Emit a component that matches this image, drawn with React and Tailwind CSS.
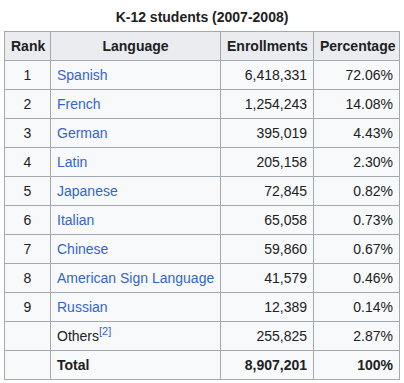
import React from 'react';

const rows = [
    ['1', 'Spanish', '6,418,331', '72.06%'],
    ['2', 'French', '1,254,243', '14.08%'],
    ['3', 'German', '395,019', '4.43%'],
    ['4', 'Latin', '205,158', '2.30%'],
    ['5', 'Japanese', '72,845', '0.82%'],
    ['6', 'Italian', '65,058', '0.73%'],
    ['7', 'Chinese', '59,860', '0.67%'],
    ['8', 'American Sign Language', '41,579', '0.46%'],
    ['9', 'Russian', '12,389', '0.14%'],
];

const cell = 'border border-[#a2a9b1] px-[6px] py-[4px] h-[29px] leading-5 whitespace-nowrap';

export default function App() {
    return (
        <div className="min-h-screen bg-white pt-[7px] pl-[4px] text-[14px] text-[#202122] font-['Liberation_Sans',Arial,sans-serif]">
            <table className="table-fixed border-collapse bg-[#f8f9fa] w-[395px]">
                <caption className="font-bold leading-5 pb-[4px] bg-white">K-12 students (2007-2008)</caption>
                <colgroup>
                    <col className="w-[46px]" />
                    <col className="w-[170px]" />
                    <col className="w-[93px]" />
                    <col className="w-[86px]" />
                </colgroup>
                <thead>
                    <tr className="bg-[#eaecf0]">
                        <th className={`${cell} text-center`}>Rank</th>
                        <th className={`${cell} text-center`}>Language</th>
                        <th className={`${cell} text-center`}>Enrollments</th>
                        <th className={`${cell} text-center`}>Percentage</th>
                    </tr>
                </thead>
                <tbody>
                    {rows.map(r => (
                        <tr key={r[0]}>
                            <td className={`${cell} text-center`}>{r[0]}</td>
                            <td className={`${cell} text-left text-[#3366cc]`}>{r[1]}</td>
                            <td className={`${cell} text-right`}>{r[2]}</td>
                            <td className={`${cell} text-right`}>{r[3]}</td>
                        </tr>
                    ))}
                    <tr>
                        <td className={cell}></td>
                        <td className={`${cell} text-left`}>
                            Others<sup className="text-[11px] text-[#3366cc] top-[-6px]">[2]</sup>
                        </td>
                        <td className={`${cell} text-right`}>255,825</td>
                        <td className={`${cell} text-right`}>2.87%</td>
                    </tr>
                    <tr className="font-bold">
                        <td className={cell}></td>
                        <td className={`${cell} text-left`}>Total</td>
                        <td className={`${cell} text-right`}>8,907,201</td>
                        <td className={`${cell} text-right`}>100%</td>
                    </tr>
                </tbody>
            </table>
        </div>
    );
}
